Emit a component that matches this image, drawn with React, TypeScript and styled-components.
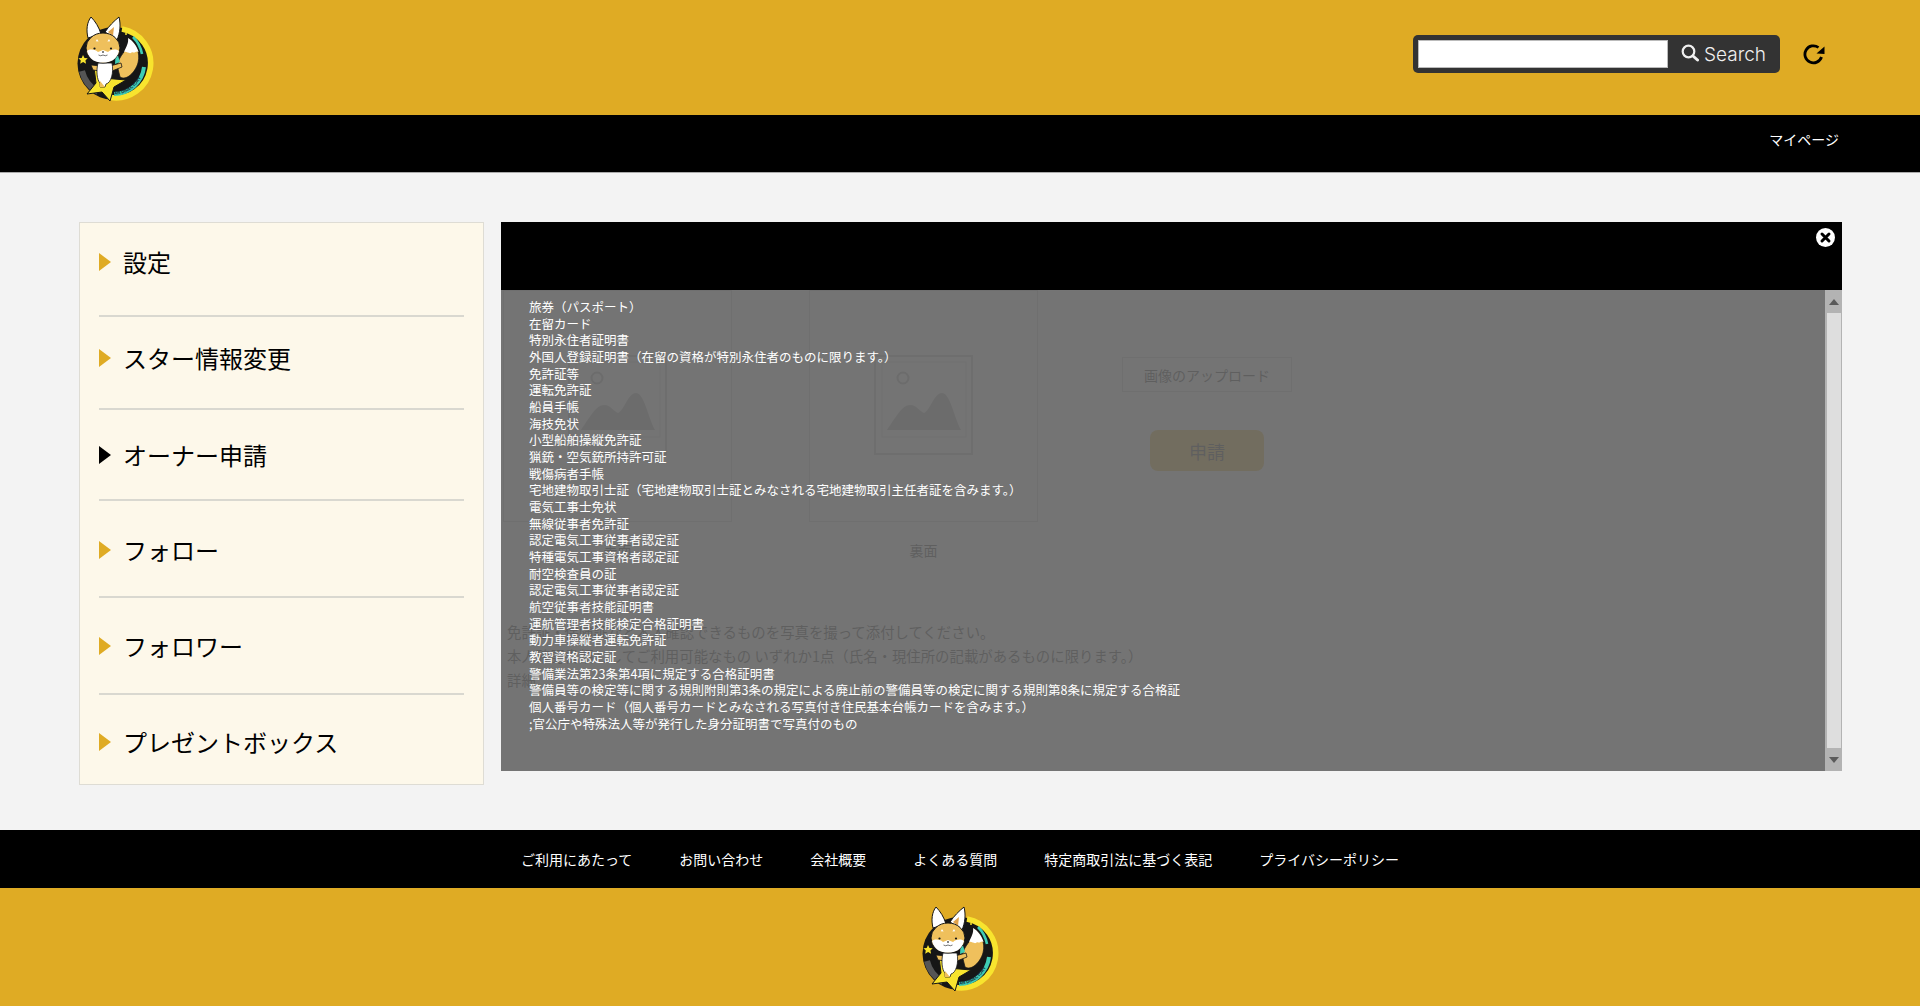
import { useId } from "react";
import styled, { createGlobalStyle } from "styled-components";

const GOLD = "#dfab24";

const GlobalStyle = createGlobalStyle`
    html, body {
        margin: 0;
        padding: 0;
        background: #f3f3f3;
    }
    body {
        font-family: "Noto Sans CJK JP", "Noto Sans", sans-serif;
        color: #000;
    }
    * {
        box-sizing: border-box;
    }
`;

const Page = styled.div`
    width: 1920px;
    height: 1006px;
    overflow: hidden;
    display: flex;
    flex-direction: column;
`;

/* header */
const TopBar = styled.header`
    height: 115px;
    background: ${GOLD};
    padding: 14px 95px 0 74px;
    display: flex;
    justify-content: space-between;
    align-items: flex-start;
`;

const LogoSvg = styled.svg`
    width: 80px;
    height: 88px;
    display: block;
`;

const TopRight = styled.div`
    margin-top: 21px;
    display: flex;
    align-items: center;
    gap: 23px;
`;

const SearchBox = styled.form`
    width: 367px;
    height: 38px;
    background: #333;
    border-radius: 5px;
    padding: 5px;
    display: flex;
    align-items: center;
`;

const SearchInput = styled.input`
    width: 250px;
    height: 28px;
    margin: 0;
    padding: 0 4px;
    background: #fff;
    border: 1px solid #bbb;
    border-radius: 0;
`;

const SearchButton = styled.button`
    border: 0;
    padding: 0 0 0 13px;
    background: transparent;
    color: #f0f0f0;
    font-family: Inter, "Liberation Sans", sans-serif;
    font-size: 19px;
    font-weight: 300;
    display: flex;
    align-items: center;
    gap: 5px;

    svg {
        margin-top: -3px;
    }
`;

const MenuBar = styled.nav`
    height: 58px;
    background: #000;
    border-bottom: 1px solid #aaa;
    padding: 0 81px 10px 0;
    display: flex;
    justify-content: flex-end;
    align-items: center;
    color: #fff;
    font-size: 14px;
`;

/* main */
const Main = styled.main`
    height: 657px;
    padding: 49px 78px 0 79px;
    display: flex;
    align-items: flex-start;
    gap: 17px;
`;

const SideMenu = styled.ul`
    width: 405px;
    height: 563px;
    margin: 0;
    padding: 0 19px;
    list-style: none;
    background: #fdf8ea;
    border: 1px solid #dedcd4;
`;

const SideItem = styled.li<{ $top: number; $bottom: number; $last?: boolean }>`
    padding: ${({ $top }) => $top}px 0 ${({ $bottom }) => $bottom}px;
    border-bottom: ${({ $last }) => ($last ? "0" : "2px solid #d9d8d0")};
    display: flex;
    align-items: center;
    gap: 12px;
    font-size: 24px;
    line-height: 36px;
`;

const Arrow = styled.span<{ $active?: boolean }>`
    width: 0;
    height: 0;
    border-style: solid;
    border-width: 9.5px 0 9.5px 12px;
    border-color: transparent transparent transparent ${({ $active }) => ($active ? "#000" : GOLD)};
`;

const Content = styled.section`
    position: relative;
    flex: 1;
    height: 549px;
    color: #222;
`;

const ApplyTitle = styled.h2`
    margin: -6px 0 0 41px;
    height: 74px;
    font-size: 24px;
    font-weight: 400;
    line-height: 36px;
    color: #000;
`;

const ApplyRow = styled.div`
    display: flex;
    align-items: flex-start;
    padding-left: 2px;
`;

const PhotoColumn = styled.div`
    width: 229px;
    margin-right: 77px;
    display: flex;
    flex-direction: column;
    align-items: center;
    gap: 18px;
    font-size: 14px;
    &:nth-child(2) {
        margin-right: 84px;
    }
`;

const PhotoFrame = styled.div`
    width: 229px;
    height: 232px;
    border: 1px solid #c4c4c4;
    padding-top: 64px;
    display: flex;
    justify-content: center;
    align-items: flex-start;
`;

const UploadColumn = styled.div`
    width: 170px;
    padding-top: 67px;
    display: flex;
    flex-direction: column;
    align-items: center;
    gap: 38px;
`;

const UploadButton = styled.button`
    width: 170px;
    height: 35px;
    padding: 0;
    background: transparent;
    border: 1px solid #c4c4c4;
    font-family: inherit;
    font-size: 14px;
    color: #222;
`;

const ApplyButton = styled.button`
    width: 114px;
    height: 41px;
    padding: 0;
    background: ${GOLD};
    border: 0;
    border-radius: 8px;
    font-family: inherit;
    font-size: 18px;
    color: #222;
`;

const Notes = styled.div`
    margin: 60px 0 0 6px;
    font-size: 14.4px;
    line-height: 24px;
`;

/* modal that covers the form */
const Modal = styled.div`
    position: absolute;
    inset: 0;
    display: flex;
    flex-direction: column;
`;

const ModalHead = styled.div`
    height: 68px;
    background: #000;
    flex-shrink: 0;
    position: relative;
`;

const CloseIcon = styled.svg`
    position: absolute;
    top: 6px;
    right: 7px;
    width: 19px;
    height: 19px;
`;

const ModalBody = styled.div`
    flex: 1;
    display: flex;
    background: rgba(102, 102, 102, 0.9);
    min-height: 0;
`;

const DocList = styled.ul`
    flex: 1;
    margin: 0;
    padding: 9px 0 0 28px;
    list-style: none;
    color: #fff;
    font-size: 12.5px;
    line-height: 16.67px;
`;

const ScrollBar = styled.div`
    width: 17px;
    background: #b3b3b3;
    display: flex;
    flex-direction: column;
`;

const ScrollStep = styled.div`
    height: 23px;
    flex-shrink: 0;
    display: flex;
    justify-content: center;
    align-items: center;
`;

const StepArrow = styled.span<{ $down?: boolean }>`
    width: 0;
    height: 0;
    border-style: solid;
    border-color: transparent;
    border-width: ${({ $down }) => ($down ? "6px 5px 0" : "0 5px 6px")};
    ${({ $down }) => ($down ? "border-top-color: #5a5a5a;" : "border-bottom-color: #5a5a5a;")}
`;

const ScrollThumb = styled.div`
    flex: 1;
    margin: 0 1px 0 2px;
    background: #dedede;
`;

/* footer */
const FooterNav = styled.nav`
    height: 58px;
    background: #000;
    display: flex;
    justify-content: center;
    align-items: center;
    gap: 47px;
    color: #fff;
    font-size: 14px;
`;

const FooterLogo = styled.footer`
    height: 118px;
    background: ${GOLD};
    padding: 16px 3px 0 0;
    display: flex;
    justify-content: center;
    align-items: flex-start;
`;

function Logo() {
    const arcId = useId();
    const fur = "#efc05c";
    const star = "#f8e42e";
    const teal = "#3fcdb4";
    const ink = "#161616";
    return (
        <LogoSvg viewBox="14 9 80 88" aria-label="Star Directory">
            {/* disc and ring */}
            <circle cx="54" cy="58.500" r="36.500" fill={ink} />
            <path d="M22 66 A33 33 0 0 0 38 87" fill="none" stroke="#555" strokeWidth="6" />
            <path d="M62 24 A34 34 0 0 1 50 92.300" fill="none" stroke={star} strokeWidth="5.600" />
            <path d="M73 32 A32.500 32.500 0 0 1 82 49" fill="none" stroke={teal} strokeWidth="2.600" />
            <path d="M84 62 A30.500 30.500 0 0 1 54 89" fill="none" stroke={teal} strokeWidth="4" />
            <path id={arcId} d="M49 89.500 A31 31 0 0 0 84 56" fill="none" />
            <text fontFamily="'Liberation Sans', sans-serif" fontSize="4.400" fontWeight="700" fill="#123">
                <textPath href={`#${arcId}`}>STAR DIRECTORY</textPath>
            </text>
            <circle cx="66" cy="29" r="1" fill={star} />
            <path d="M23 50 l1.500 3 3.200.3 -2.300 2.200.7 3.200 -3-1.600 -2.900 1.700.6-3.300 -2.400-2.200 3.300-.4z" fill={star} />

            {/* tail */}
            <path d="M58 64 C 56 56 62 50 66 44 C 68 40 69 36 68 33 C 75 37 81 47 78 58 C 75 68 66 76 60 72 Z" fill={fur} stroke={ink} strokeWidth="0.800" />
            <path d="M64 47 C 66 42 69 38 68 33 C 73 36 77 41 78.500 47 C 76 45 75 49 72 47 C 70 50 67 46 64 47 Z" fill="#fff" />

            {/* star */}
            <path d="M34 62 L43 73 L66 75 L54 82 L50 96 L42 87 L27 89 L36 78 Z" fill={star} stroke={ink} strokeWidth="1" strokeLinejoin="round" />

            {/* ears */}
            <path d="M28 33 C 26 25 27 17 31 12 C 35 16 39 22 41 29 Z" fill="#fff" stroke={ink} strokeWidth="1" />
            <path d="M45 27 C 49 21 54 16 59 12 C 61 20 60 28 57 35 Z" fill="#fff" stroke={ink} strokeWidth="1" />
            <path d="M48 27 L54 22 L53 31 Z" fill="#e0a24a" />

            {/* arms and body */}
            <path d="M31 60 L41 61 L40 66 L33 65 Z" fill={fur} stroke={ink} strokeWidth="0.800" />
            <path d="M50 61 L61 58 L62 62 L52 66 Z" fill={fur} stroke={ink} strokeWidth="0.800" />
            <path d="M56 44 L60 57 L55 59 Z" fill={teal} />
            <path d="M38 58 C 36 66 37 75 40 78 L40 82 L45 82 L46 79 C 51 78 54 68 52 58 Z" fill="#fff" stroke={ink} strokeWidth="0.800" />
            <path d="M40 76 L39.500 82 L45 82 Z" fill={fur} />

            {/* head */}
            <ellipse cx="43" cy="43" rx="17" ry="15" fill={fur} stroke={ink} strokeWidth="1" />
            <path d="M27 46 C 30 44 34 44 38 47 L 43 45 L 48 47 C 52 44 56 44 59 46 C 57 55 50 57.500 43 57.500 C 36 57.500 29 55 27 46 Z" fill="#fff" />
            <path d="M37 34 l1.600 2.600 -2.800-.4z M49 34 l-1.600 2.600 2.800-.4z" fill="#fff" />
            <circle cx="34.500" cy="43.500" r="1.100" fill={ink} />
            <circle cx="51" cy="43.500" r="1.100" fill={ink} />
            <ellipse cx="43" cy="47" rx="1" ry="0.700" fill={ink} />
            <path d="M38.500 50 q2 1.500 4.500 0 q2.500 1.500 4.500 0" fill="none" stroke={ink} strokeWidth="0.600" />
        </LogoSvg>
    );
}

function PhotoPlaceholder() {
    return (
        <svg width="99" height="100" viewBox="0 0 99 100" fill="none" aria-hidden="true">
            <rect x="1" y="1" width="97" height="98" stroke="#b4b4b4" strokeWidth="2" />
            <rect x="8" y="7" width="84" height="75" stroke="#c8c8c8" strokeWidth="1" />
            <circle cx="29" cy="23" r="5.500" stroke="#a0a0a0" strokeWidth="2" />
            <path d="M13 75 C 22 62 28 50 36 50 C 43 50 46 57 50 58 C 56 56 60 38 68 38 C 76 38 80 62 87 75 Z" fill="#a4a4a4" />
        </svg>
    );
}

const sideItems = [
    { label: "設定", top: 21, bottom: 35 },
    { label: "スター情報変更", top: 23, bottom: 32 },
    { label: "オーナー申請", top: 27, bottom: 26, active: true },
    { label: "フォロー", top: 31, bottom: 28 },
    { label: "フォロワー", top: 30, bottom: 29 },
    { label: "プレゼントボックス", top: 29, bottom: 24, last: true },
];

const documents = [
    "旅券（パスポート）",
    "在留カード",
    "特別永住者証明書",
    "外国人登録証明書（在留の資格が特別永住者のものに限ります。）",
    "免許証等",
    "運転免許証",
    "船員手帳",
    "海技免状",
    "小型船舶操縦免許証",
    "猟銃・空気銃所持許可証",
    "戦傷病者手帳",
    "宅地建物取引士証（宅地建物取引士証とみなされる宅地建物取引主任者証を含みます。）",
    "電気工事士免状",
    "無線従事者免許証",
    "認定電気工事従事者認定証",
    "特種電気工事資格者認定証",
    "耐空検査員の証",
    "認定電気工事従事者認定証",
    "航空従事者技能証明書",
    "運航管理者技能検定合格証明書",
    "動力車操縦者運転免許証",
    "教習資格認定証",
    "警備業法第23条第4項に規定する合格証明書",
    "警備員等の検定等に関する規則附則第3条の規定による廃止前の警備員等の検定に関する規則第8条に規定する合格証",
    "個人番号カード（個人番号カードとみなされる写真付き住民基本台帳カードを含みます。）",
    ";官公庁や特殊法人等が発行した身分証明書で写真付のもの",
];

const footerLinks = [
    "ご利用にあたって",
    "お問い合わせ",
    "会社概要",
    "よくある質問",
    "特定商取引法に基づく表記",
    "プライバシーポリシー",
];

export default function App() {
    return (
        <Page>
            <GlobalStyle />
            <TopBar>
                <Logo />
                <TopRight>
                    <SearchBox onSubmit={(e) => e.preventDefault()}>
                        <SearchInput type="text" aria-label="Search" />
                        <SearchButton type="submit">
                            <svg width="18" height="18" viewBox="0 0 18 18" fill="none" aria-hidden="true">
                                <circle cx="7.500" cy="7.500" r="5.800" stroke="#f0f0f0" strokeWidth="2.200" />
                                <path d="M12 12 L16.500 16" stroke="#f0f0f0" strokeWidth="3" strokeLinecap="round" />
                            </svg>
                            Search
                        </SearchButton>
                    </SearchBox>
                    <svg width="22" height="21" viewBox="0 0 22 21" fill="none" aria-hidden="true">
                        <path d="M18.500 13 A8.500 8.500 0 1 1 15.500 3.500" stroke="#000" strokeWidth="2.800" />
                        <path d="M21.500 2.500 L21.500 10 L13.500 9.500 Z" fill="#000" />
                    </svg>
                </TopRight>
            </TopBar>
            <MenuBar>マイページ</MenuBar>

            <Main>
                <SideMenu>
                    {sideItems.map((item) => (
                        <SideItem key={item.label} $top={item.top} $bottom={item.bottom} $last={item.last}>
                            <Arrow $active={item.active} />
                            {item.label}
                        </SideItem>
                    ))}
                </SideMenu>

                <Content>
                    <ApplyTitle>本人確認書類の申請</ApplyTitle>
                    <ApplyRow>
                        <PhotoColumn>
                            <PhotoFrame>
                                <PhotoPlaceholder />
                            </PhotoFrame>
                            表面
                        </PhotoColumn>
                        <PhotoColumn>
                            <PhotoFrame>
                                <PhotoPlaceholder />
                            </PhotoFrame>
                            裏面
                        </PhotoColumn>
                        <UploadColumn>
                            <UploadButton type="button">画像のアップロード</UploadButton>
                            <ApplyButton type="button">申請</ApplyButton>
                        </UploadColumn>
                    </ApplyRow>
                    <Notes>
                        <div>免許証・保険証など本人確認できるものを写真を撮って添付してください。</div>
                        <div>本人確認書類としてご利用可能なもの いずれか1点（氏名・現住所の記載があるものに限ります。）</div>
                        <div>詳細</div>
                    </Notes>

                    <Modal>
                        <ModalHead>
                            <CloseIcon viewBox="0 0 19 19" aria-label="閉じる">
                                <circle cx="9.500" cy="9.500" r="9.500" fill="#fff" />
                                <path d="M6 6 L13 13 M13 6 L6 13" stroke="#000" strokeWidth="3" strokeLinecap="round" />
                            </CloseIcon>
                        </ModalHead>
                        <ModalBody>
                            <DocList>
                                {documents.map((doc, i) => (
                                    <li key={i}>{doc}</li>
                                ))}
                            </DocList>
                            <ScrollBar>
                                <ScrollStep>
                                    <StepArrow />
                                </ScrollStep>
                                <ScrollThumb />
                                <ScrollStep>
                                    <StepArrow $down />
                                </ScrollStep>
                            </ScrollBar>
                        </ModalBody>
                    </Modal>
                </Content>
            </Main>

            <FooterNav>
                {footerLinks.map((link) => (
                    <span key={link}>{link}</span>
                ))}
            </FooterNav>
            <FooterLogo>
                <Logo />
            </FooterLogo>
        </Page>
    );
}
